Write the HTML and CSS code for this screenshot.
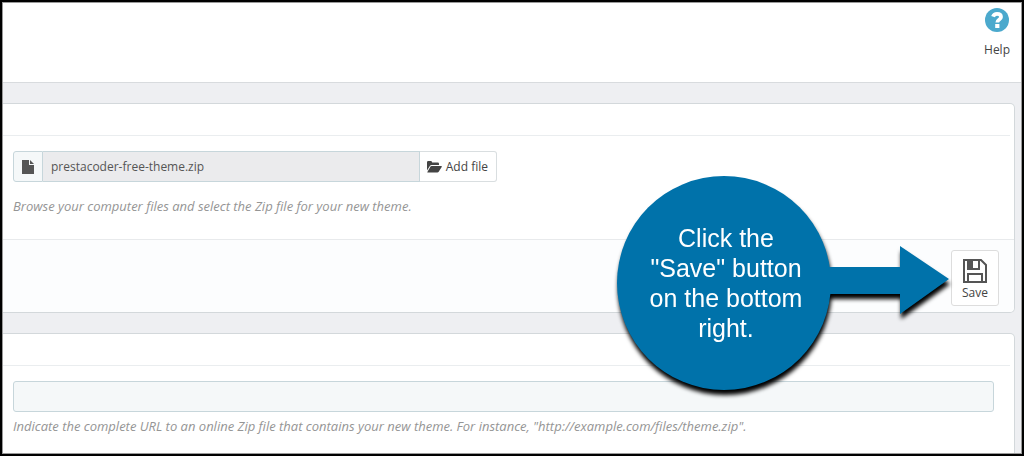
FILE: index.html
```html
<!DOCTYPE html>
<html lang="en">
<head>
  <meta charset="UTF-8" />
  <meta name="viewport" content="width=device-width, initial-scale=1.0"/>
  <title>Add new theme</title>
  <link rel="stylesheet" href="styles.css">
</head>
<body>

  <header class="page-head">
    <a href="#help" class="help-link">
      <svg width="24" height="24" viewBox="0 0 24 24" aria-hidden="true">
        <circle cx="12" cy="12" r="12" fill="#4ba9cd"/>
        <path d="M8 8.700C8.700 6.800 10 5.800 12 5.800C14.400 5.800 16 7 16 9C16 11.700 12.300 11.400 12.300 14.600" fill="none" stroke="#fff" stroke-width="3.800"/>
        <rect x="10.200" y="16" width="4.200" height="4" fill="#fff"/>
      </svg>
      <span>Help</span>
    </a>
  </header>

  <main class="content">

    <!-- Import from computer -->
    <form class="panel">
      <div class="panel-heading"></div>
      <div class="panel-body">
        <div class="input-group">
          <span class="addon">
            <svg width="12" height="14" viewBox="0 0 12 14" aria-hidden="true">
              <path d="M0 0H7V5H12V14H0ZM8 0L12 4H8Z" fill="#555"/>
            </svg>
          </span>
          <input type="text" class="file-name" value="prestacoder-free-theme.zip" aria-label="Zip file" readonly />
          <button type="button" class="add-file">
            <svg width="15" height="12" viewBox="0 0 15 12" aria-hidden="true">
              <path d="M0 9.500V1.200Q0 0 1.200 0H4Q5 0 5.200 1.600H10.800Q12 1.600 12 2.800V4H4.600Q3.600 4 3 4.800ZM4.500 5H14.300Q15.300 5 14.700 6L11.700 10.800Q11.300 11.500 10.300 11.500H.8Q0 11.500 .5 10.700L3.500 5.600Q3.900 5 4.500 5Z" fill="#444"/>
            </svg>
            Add file
          </button>
        </div>
        <p class="hint hint-file">Browse your computer files and select the Zip file for your new theme.</p>
      </div>

      <div class="panel-footer">
        <div class="save-area">
          <button type="submit" class="save">
            <svg width="24" height="24" viewBox="0 0 24 24" aria-hidden="true">
              <path d="M1 1H18L23 6V23H1Z" fill="none" stroke="#555" stroke-width="2"/>
              <path d="M5 1V10H16V1M5 23V15H19V23" fill="none" stroke="#555" stroke-width="2"/>
              <path d="M5 1H10V10H5Z" fill="#555"/>
              <path d="M10 2H13V7H10Z" fill="#fff"/>
              <path d="M5 1H10V10H5Z" fill="#555"/>
            </svg>
            <span>Save</span>
          </button>

          <div class="callout">
            <div class="callout-circle">Click the<br>"Save" button<br>on the bottom<br>right.</div>
            <svg class="callout-arrow" width="122" height="68" viewBox="0 0 122 68" aria-hidden="true">
              <path d="M0 21H73V0L122 33L73 68V48H0Z" fill="#0072aa"/>
            </svg>
          </div>
        </div>
      </div>
    </form>

    <!-- Import from the web -->
    <form class="panel">
      <div class="panel-heading"></div>
      <div class="panel-body">
        <input type="text" class="url" aria-label="Archive URL" />
        <p class="hint">Indicate the complete URL to an online Zip file that contains your new theme. For instance, "http://example.com/files/theme.zip".</p>
      </div>
    </form>

  </main>

</body>
</html>
```
FILE: styles.css
```css
* {
  box-sizing: border-box;
}

body {
  margin: 0;
  height: 100vh;
  overflow: hidden;
  border: 2px solid #000;
  background-color: #eeeff2;
  color: #555;
  font-family: "Open Sans", sans-serif;
  font-size: 12px;
  line-height: 16px;
}

/* thin grey edge inside the black frame */
body::after {
  content: "";
  position: fixed;
  inset: 2px;
  border: 1px solid #999;
  pointer-events: none;
}

button, input {
  font: inherit;
  color: inherit;
}

button {
  cursor: pointer;
}

.page-head {
  display: flex;
  justify-content: flex-end;
  height: 81px;
  padding: 6px 12px;
  background-color: #fff;
  border-bottom: 1px solid #d8dbde;
}

.help-link {
  display: flex;
  flex-direction: column;
  align-items: center;
  gap: 10px;
  color: #444;
  text-decoration: none;
}

.content {
  display: flex;
  flex-direction: column;
  gap: 20px;
  padding: 20px 7px 0 0;
}

.panel {
  background-color: #fff;
  border: 1px solid #d3d8db;
  border-left: none;
  border-radius: 0 5px 5px 0;
}

.panel-heading {
  height: 32px;
  margin-right: 4px;
  border-bottom: 1px solid #eaedef;
}

.panel-body {
  padding: 15px 20px 25px 11px;
}

.input-group {
  display: flex;
  width: 484px;
  max-width: 100%;
  height: 31px;
}

.addon {
  display: flex;
  align-items: center;
  justify-content: center;
  width: 30px;
  background-color: #f5f8f9;
  border: 1px solid #c7d6db;
  border-radius: 3px 0 0 3px;
}

.file-name {
  flex: 1;
  min-width: 0;
  padding: 0 8px;
  background-color: #ebebed;
  border: 1px solid #c7d6db;
  border-left: none;
  border-radius: 0;
}

.add-file {
  display: flex;
  align-items: center;
  gap: 4px;
  padding: 0 8px 0 7px;
  background-color: #fff;
  color: #444;
  border: 1px solid #d9dee0;
  border-left: none;
  border-radius: 0 3px 3px 0;
}

.hint {
  margin: 6px 0 0;
  color: #959595;
  font-size: 13px;
  font-style: italic;
}

.hint-file {
  margin-top: 16px;
}

.panel-footer {
  display: flex;
  justify-content: flex-end;
  height: 73px;
  padding: 10px 15px;
  background-color: #fcfdfe;
  border-top: 1px solid #e8eaec;
  border-radius: 0 0 5px 0;
}

.save-area {
  position: relative;
}

.save {
  display: flex;
  flex-direction: column;
  align-items: center;
  gap: 2px;
  width: 48px;
  height: 56px;
  padding: 8px 0 0;
  background-color: #fff;
  color: #444;
  border: 1px solid #ddd;
  border-radius: 3px;
}

.save svg {
  flex: none;
}

/* Callout bubble pointing at the save button */
.callout {
  position: absolute;
  top: -74px;
  right: 50px;
  display: flex;
  align-items: center;
  filter: drop-shadow(1px 5px 2px #000);
}

.callout-circle {
  display: flex;
  align-items: center;
  justify-content: center;
  width: 214px;
  height: 214px;
  padding-left: 4px;
  border-radius: 50%;
  background-color: #0072aa;
  color: #fff;
  font-family: "Liberation Sans", Arial, sans-serif;
  font-size: 25px;
  line-height: 30px;
  text-align: center;
  white-space: nowrap;
}

.callout-arrow {
  margin-left: -4px;
  margin-bottom: 6px;
}

.url {
  display: block;
  width: 100%;
  height: 31px;
  padding: 0 8px;
  background-color: #f5f8f9;
  border: 1px solid #c7d6db;
  border-radius: 3px;
}
```
